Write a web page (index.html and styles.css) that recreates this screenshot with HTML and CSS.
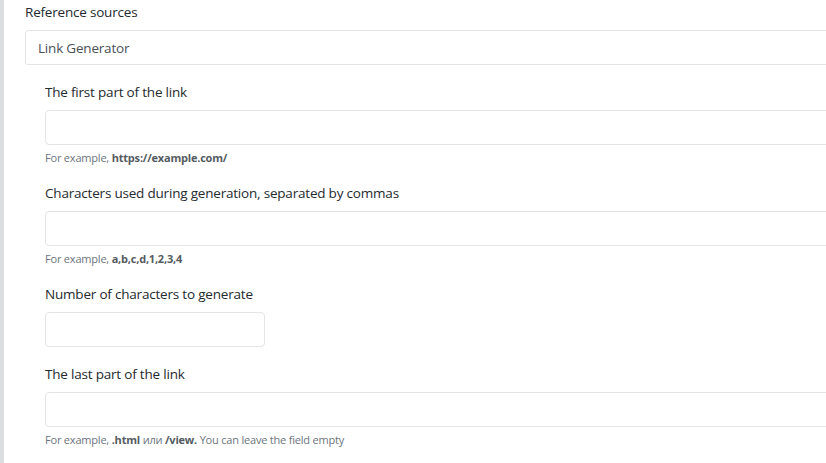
FILE: index.html
```html
<!DOCTYPE html>
<html lang="en">
<head>
<meta charset="utf-8">
<title>Link Generator</title>
<link rel="stylesheet" href="styles.css">
</head>
<body>
<div class="page">
  <div class="group">
    <label class="label">Reference sources</label>
    <div class="select">Link Generator</div>
  </div>
  <div class="sub">
    <div class="group">
      <label class="label">The first part of the link</label>
      <div class="input"></div>
      <div class="help">For example, <b>https://example.com/</b></div>
    </div>
    <div class="group">
      <label class="label">Characters used during generation, separated by commas</label>
      <div class="input"></div>
      <div class="help">For example, <b>a,b,c,d,1,2,3,4</b></div>
    </div>
    <div class="group">
      <label class="label">Number of characters to generate</label>
      <div class="input input-small"></div>
    </div>
    <div class="group">
      <label class="label">The last part of the link</label>
      <div class="input"></div>
      <div class="help">For example, <b>.html</b> или <b>/view.</b> You can leave the field empty</div>
    </div>
  </div>
</div>
</body>
</html>
```
FILE: styles.css
```css
html, body {
  margin: 0;
  padding: 0;
  background: #fff;
  overflow: hidden;
}
body {
  font-family: "Open Sans", "Noto Sans", sans-serif;
  color: #252a2e;
  width: 826px;
  height: 463px;
}
.page {
  border-left: 4px solid #dcdde0;
  padding-left: 21px;
  padding-top: 1px;
  width: 1000px;
  box-sizing: border-box;
  height: 463px;
}
.label {
  display: block;
  font-size: 13.5px;
  line-height: 21px;
  padding-top: 1px;
  margin-bottom: 7px;
  letter-spacing: -0.2px;
}
.group {
  margin-bottom: 16px;
}
.select {
  height: 35px;
  box-sizing: border-box;
  border: 1px solid #e2e4e7;
  border-radius: 3px;
  padding: 2px 12px 0;
  font-size: 13.5px;
  line-height: 31px;
  color: #495057;
  letter-spacing: -0.2px;
}
.sub {
  padding-left: 20px;
}
.input {
  height: 35px;
  box-sizing: border-box;
  border: 1px solid #e2e4e7;
  border-radius: 4px;
  background: #fff;
}
.input-small {
  width: 220px;
}
.help {
  font-size: 11px;
  line-height: 17px;
  margin-top: 4px;
  color: #6c757d;
  letter-spacing: -0.2px;
}
.help b {
  font-weight: 700;
  color: #555b61;
}
```
